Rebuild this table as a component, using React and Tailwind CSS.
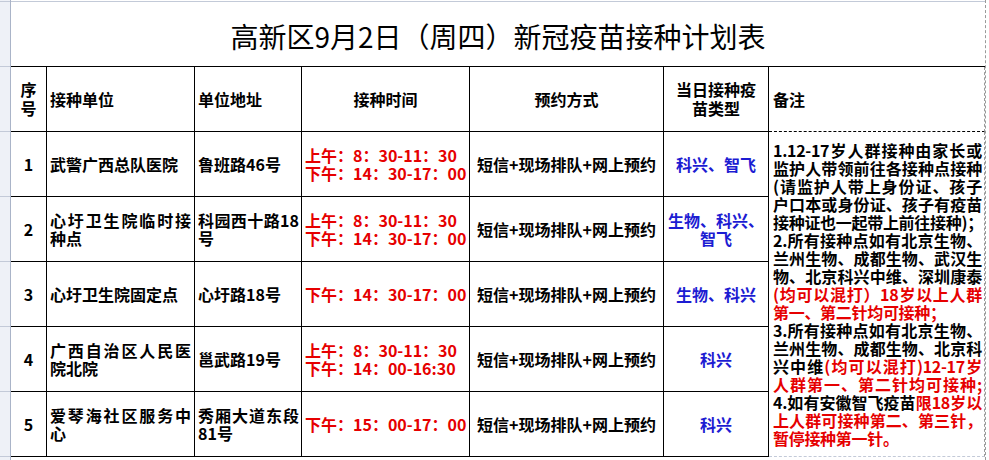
import React from "react";

const red = "text-[#e60000]";
const blue = "text-[#1c1cd2]";

const rows = [
  {
    no: "1",
    unit: ["武警广西总队医院"],
    addr: ["鲁班路46号"],
    time: ["上午：8：30-11：30", "下午：14：30-17：00"],
    vaccine: ["科兴、智飞"],
  },
  {
    no: "2",
    unit: ["心圩卫生院临时接", "种点"],
    addr: ["科园西十路18", "号"],
    time: ["上午：8：30-11：30", "下午：14：30-17：00"],
    vaccine: ["生物、科兴、", "智飞"],
  },
  {
    no: "3",
    unit: ["心圩卫生院固定点"],
    addr: ["心圩路18号"],
    time: ["下午：14：30-17：00"],
    vaccine: ["生物、科兴"],
  },
  {
    no: "4",
    unit: ["广西自治区人民医", "院北院"],
    addr: ["邕武路19号"],
    time: ["上午：8：30-11：30", "下午：14：00-16:30"],
    vaccine: ["科兴"],
  },
  {
    no: "5",
    unit: ["爱琴海社区服务中", "心"],
    addr: ["秀厢大道东段", "81号"],
    time: ["下午：15：00-17：00"],
    vaccine: ["科兴"],
  },
];

// each remark line: list of [text, isRed], and whether the line is stretched
const remarks = [
  [[["1.12-17岁人群接种由家长或", false]], true],
  [[["监护人带领前往各接种点接种", false]], true],
  [[["(请监护人带上身份证、孩子", false]], true],
  [[["户口本或身份证、孩子有疫苗", false]], true],
  [[["接种证也一起带上前往接种)；", false]], true],
  [[["2.所有接种点如有北京生物、", false]], true],
  [[["兰州生物、成都生物、武汉生", false]], true],
  [[["物、北京科兴中维、深圳康泰", false]], true],
  [[["(均可以混打）18岁以上人群", true]], true],
  [[["第一、第二针均可接种；", true]], false],
  [[["3.所有接种点如有北京生物、", false]], true],
  [[["兰州生物、成都生物、北京科", false]], true],
  [[["兴中维", false], ["(均可以混打)12-17岁", true]], true],
  [[["人群第一、第二针均可接种;", true]], true],
  [[["4.如有安徽智飞疫苗", false], ["限18岁以", true]], true],
  [[["上人群可接种第二、第三针，", true]], true],
  [[["暂停接种第一针。", true]], false],
];

const cell = "border-r border-b border-black flex items-center";

function Lines({ lines, stretch }) {
  return (
    <div className="w-full leading-[18px]">
      {lines.map((l, i) => (
        <div
          key={i}
          className={
            stretch && i < lines.length - 1
              ? "text-justify [text-align-last:justify]"
              : ""
          }
        >
          {l}
        </div>
      ))}
    </div>
  );
}

export default function App() {
  return (
    <div className="w-[989px] h-[460px] overflow-hidden bg-white flex font-['Noto_Sans_CJK_SC',sans-serif] text-black">
      {/* row header gutter */}
      <div className="w-[11px] shrink-0 bg-[#eef1f7] border-r border-[#aab4c8] flex flex-col">
        <div className="h-[2px] border-b border-[#c3cad8]" />
        <div className="h-[65px] border-b border-[#c3cad8]" />
        {[0, 1, 2, 3, 4, 5].map((i) => (
          <div key={i} className="h-[65px] border-b border-[#c3cad8]" />
        ))}
      </div>

      <div className="w-[974px] shrink-0 flex flex-col">
        <div className="h-[2px] border-b border-[#c3cad8]" />
        <div className="h-[64px] flex items-center justify-center pt-[3px] text-[28px] font-normal">
          高新区9月2日（周四）新冠疫苗接种计划表
        </div>

        <div className="grid grid-cols-[36px_148px_107px_168px_194px_105px_216px] grid-rows-[65px_repeat(5,65px)] border-t border-black text-[16px] font-bold">
          {/* header */}
          <div className={`${cell} justify-center text-center leading-[19px]`}>
            序<br />号
          </div>
          <div className={`${cell} pl-[3px]`}>接种单位</div>
          <div className={`${cell} pl-[3px]`}>单位地址</div>
          <div className={`${cell} justify-center`}>接种时间</div>
          <div className={`${cell} justify-center`}>预约方式</div>
          <div className={`${cell} justify-center text-center leading-[19px]`}>
            当日接种疫
            <br />
            苗类型
          </div>
          <div className="border-r border-dashed border-r-[#9a9a9a] border-b border-b-black flex items-center pl-[4px]">
            备注
          </div>

          {rows.map((r, idx) => (
            <React.Fragment key={r.no}>
              <div className={`${cell} justify-center`}>{r.no}</div>
              <div className={`${cell} pl-[3px] pr-[3px]`}>
                <Lines lines={r.unit} stretch />
              </div>
              <div className={`${cell} pl-[3px] pr-[2px]`}>
                <Lines lines={r.addr} stretch />
              </div>
              <div className={`${cell} pl-[3px] ${red}`}>
                <Lines lines={r.time} />
              </div>
              <div className={`${cell} justify-center`}>短信+现场排队+网上预约</div>
              <div className={`${cell} justify-center text-center ${blue}`}>
                <Lines lines={r.vaccine} />
              </div>
              {idx === 0 && (
                <div className="row-span-5 border-r border-dashed border-r-[#9a9a9a] border-b border-b-[#c3cad8] flex items-center pl-[4px] pr-[2px] overflow-hidden">
                  <div className="w-full leading-[18px] tracking-[-0.3px]">
                    {remarks.map(([parts, stretch], i) => (
                      <div
                        key={i}
                        className={`whitespace-nowrap ${
                          stretch ? "text-justify [text-align-last:justify]" : ""
                        }`}
                      >
                        {parts.map(([t, isRed], j) => (
                          <span key={j} className={isRed ? red : ""}>
                            {t}
                          </span>
                        ))}
                      </div>
                    ))}
                  </div>
                </div>
              )}
            </React.Fragment>
          ))}
        </div>
      </div>

      <div className="flex-1 border-l border-dashed border-[#9a9a9a]" />
    </div>
  );
}
